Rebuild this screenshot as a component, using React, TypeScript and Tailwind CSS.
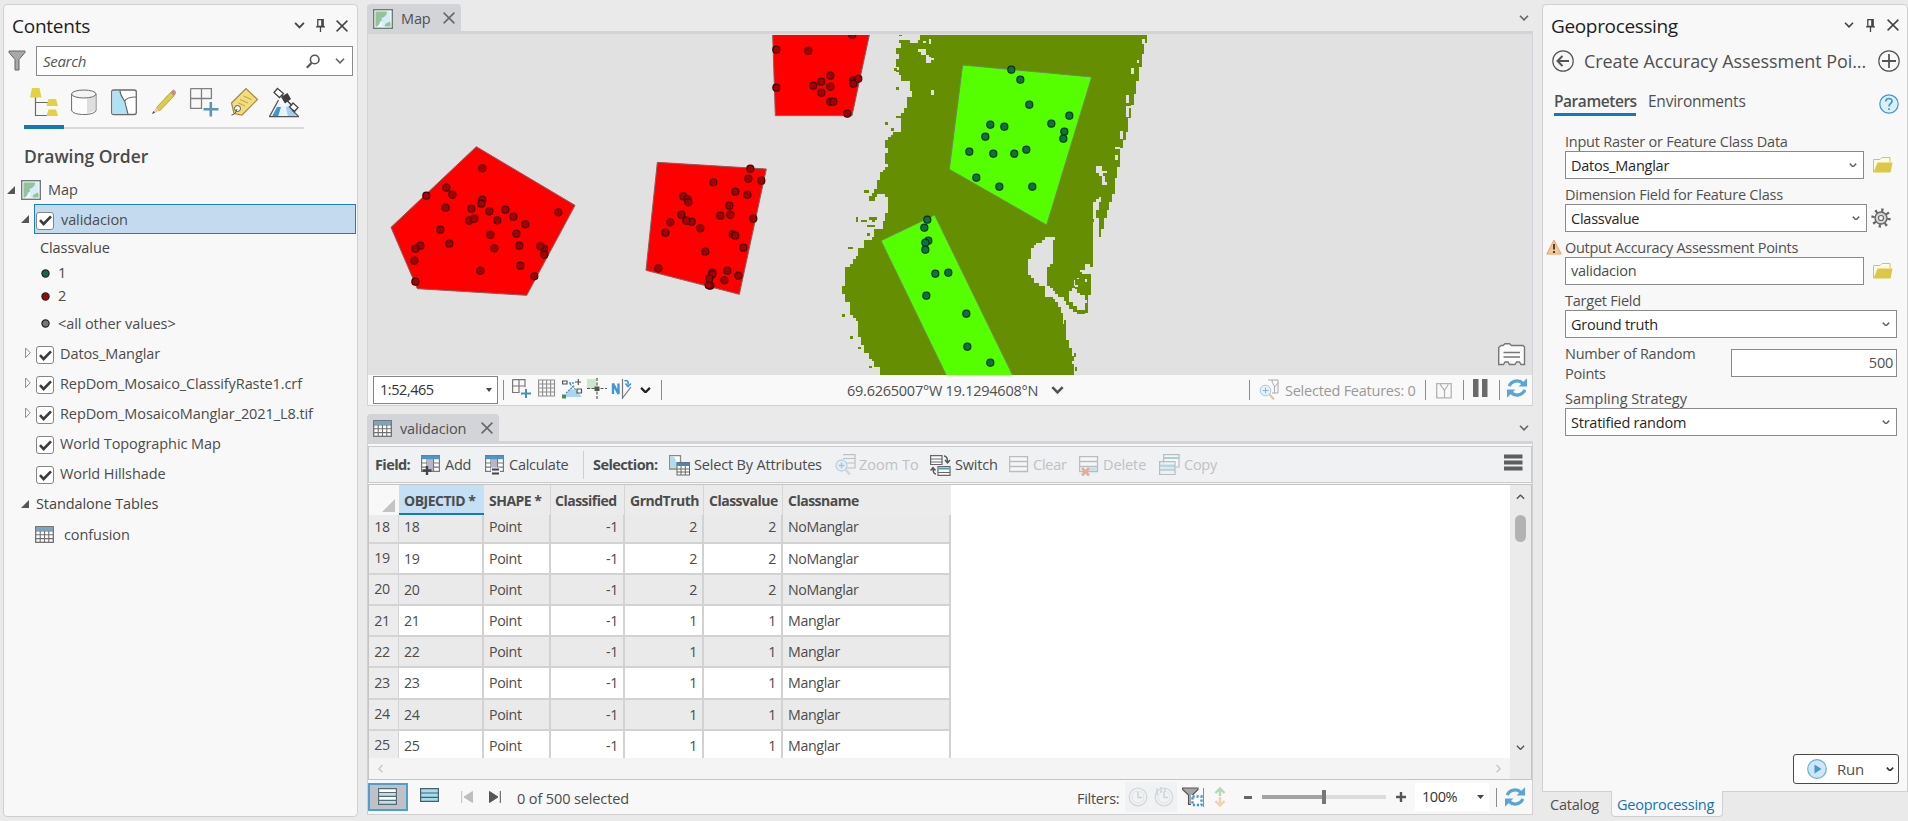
import type { ReactNode } from "react";

/* ---------- small shared icons ---------- */

function Chevron({ size = 10, color = "#444", sw = 1.6 }: { size?: number; color?: string; sw?: number }) {
  return (
    <svg width={size} height={size * 0.6} viewBox="0 0 10 6" className="shrink-0">
      <path d="M1 0.8 5 4.9 9 0.8" fill="none" stroke={color} strokeWidth={sw} />
    </svg>
  );
}

function Cross({ size = 12, color = "#444" }: { size?: number; color?: string }) {
  return (
    <svg width={size} height={size} viewBox="0 0 12 12" className="shrink-0">
      <path d="M0.6 0.6 11.4 11.4M11.4 0.6 0.6 11.4" stroke={color} strokeWidth="1.5" />
    </svg>
  );
}

function Pin() {
  return (
    <svg width="9" height="13" viewBox="0 0 9 13" className="shrink-0">
      <path d="M1.8 0.7H7.2V7.5H1.8ZM0 7.9H9M4.5 8V13" fill="none" stroke="#444" strokeWidth="1.3" />
      <path d="M5.2 1H7V7.5H5.2Z" fill="#444" />
    </svg>
  );
}

function Refresh() {
  return (
    <svg width="20" height="20" viewBox="0 0 20 20" className="shrink-0">
      <path d="M2.2 8.2C4.500 2.600 12 1.200 16 5.600" fill="none" stroke="#5aa5d8" strokeWidth="3.200" />
      <path d="M20 0.300V8.600H11.600Z" fill="#5aa5d8" />
      <path d="M17.800 11.800C15.500 17.400 8 18.800 4 14.400" fill="none" stroke="#5aa5d8" strokeWidth="3.200" />
      <path d="M0 19.700V11.400H8.400Z" fill="#5aa5d8" />
    </svg>
  );
}

function MapIcon() {
  return (
    <svg width="20" height="20" viewBox="0 0 20 20" className="shrink-0">
      <rect x="0.7" y="0.7" width="18.6" height="18.6" fill="#fff" stroke="#6e7b78" strokeWidth="1.4" />
      <rect x="2.5" y="2.5" width="15" height="15" fill="#d6ecf7" />
      <path d="M2.500 2.500H14L13.500 5.500 11 8 8.500 9 9 11.500 7 12.500 6.500 15 4 17.500H2.500Z" fill="#93c39b" />
      <path d="M11.500 17.500 12.500 14.500 14.500 14 16 12.500 17.500 13.500V17.500Z" fill="#93c39b" />
      <path d="M4.500 17.500 6.500 15 8 12.500 10 14 8.500 17.500Z" fill="#eef7fb" />
    </svg>
  );
}

function TableIcon() {
  return (
    <svg width="19" height="17" viewBox="0 0 19 17" className="shrink-0">
      <rect x="0.7" y="0.7" width="17.6" height="15.6" fill="#fff" stroke="#707070" strokeWidth="1.3" />
      <rect x="1" y="1" width="17" height="3.6" fill="#6fa8cc" />
      <path d="M1 5H18M1 8.8H18M1 12.6H18M5.2 5V16M9.5 5V16M13.8 5V16" stroke="#707070" strokeWidth="1.1" />
    </svg>
  );
}

function Checkbox() {
  return (
    <span className="flex h-[18px] w-[18px] shrink-0 items-center justify-center rounded-[3px] border border-[#858585] bg-white">
      <svg width="13" height="11" viewBox="0 0 13 11">
        <path d="M1 5.2 4.6 9 12 1.4" fill="none" stroke="#3c3c3c" strokeWidth="2.6" />
      </svg>
    </span>
  );
}

function Expanded() {
  return (
    <svg width="8" height="8" viewBox="0 0 8 8" className="shrink-0">
      <path d="M8 0V8H0Z" fill="#555" />
    </svg>
  );
}

function Collapsed() {
  return (
    <svg width="6" height="12" viewBox="0 0 6 12" className="shrink-0">
      <path d="M0.6 1V10.6L5.2 5.8Z" fill="#fff" stroke="#8a8a8a" strokeWidth="1" />
    </svg>
  );
}

function Dot({ fill }: { fill: string }) {
  return (
    <svg width="9" height="9" viewBox="0 0 9 9" className="shrink-0">
      <circle cx="4.5" cy="4.5" r="3.6" fill={fill} stroke="#222" strokeWidth="1.2" />
    </svg>
  );
}

function Sep({ className = "" }: { className?: string }) {
  return <span className={`w-px shrink-0 bg-[#8c8c8c] ${className}`} />;
}

/* ---------- contents pane ---------- */

function ContentsTabs() {
  return (
    <div className="ml-[20px] mt-[10px] flex h-[44px] w-[281px] shrink-0 flex-col">
      <svg width="281" height="36" viewBox="24 86 281 36">
        <path d="M35.5 95V115.500H48M35.500 102.500H48" fill="none" stroke="#6a6a6a" strokeWidth="1.200" />
        <path d="M32 88H39.500L41.500 97.500H30ZM48.500 99H56L58 106H46.500ZM48.500 109.500H56L58 116H46.500Z" fill="#e3d044" />
        <path d="M71.600 94V110C71.600 116 96 116 96 110V94Z" fill="#fdfdfd" stroke="#6a6a6a" />
        <path d="M87 98.500 95.500 96V110.500L87 113.500Z" fill="#dedede" />
        <ellipse cx="83.800" cy="94" rx="12.200" ry="4" fill="#f4f4f4" stroke="#6a6a6a" />
        <rect x="111.700" y="90" width="24.600" height="24.500" rx="2" fill="#fff" stroke="#6a6a6a" strokeWidth="1.300" />
        <path d="M112.500 91H120C120 96 124 99 125 102C126 107 127 109 128 114H112.500Z" fill="#aee3f5" />
        <path d="M120 90.500C120 96 124 99 125 102C126 107 127 109 128 114.500M124.500 101.500C126 98 131 97 136 97" fill="none" stroke="#6a6a6a" strokeWidth="1.200" />
        <path d="M156.500 107.500 170.500 92.500 174 96 159.500 111Z" fill="#e0cb47" stroke="#98904a" strokeWidth="0.700" />
        <path d="M156.500 107.500 159.500 111 152 114Z" fill="#e8cda0" />
        <path d="M152 114 153.500 111 155 112.800Z" fill="#444" />
        <path d="M170.500 92.500 172.500 90C174 89 177 92 175.600 94L174 96Z" fill="#c98a80" />
        <path d="M190.600 88.600H211.400V99M190.600 88.600V108.400H201.500V88.600M190.600 98.500H211.400V99" fill="none" stroke="#808080" strokeWidth="1.300" />
        <path d="M210.800 102V116.500M203.500 109.300H218.500" stroke="#5f93b4" strokeWidth="2.600" />
        <path d="M231.500 103 246 88.500 257.500 99.500 242 115 234 113.500Z" fill="#f3db7e" stroke="#a08c3e" strokeWidth="1.200" />
        <path d="M240 99.500 248 103M243.500 96 251.500 99.500M238.500 103 245 106" stroke="#b8a050" strokeWidth="1" />
        <circle cx="237.500" cy="108.500" r="3" fill="#fff" stroke="#555" />
        <path d="M237 109C236 113 234 115 231.500 115" fill="none" stroke="#555" />
        <path d="M269.500 116.500 275 106 279 103 284 106 290 103 298.500 116.500Z" fill="#e7f3fa" />
        <path d="M272 116.500 277 107 281 107 278 116.500Z" fill="#3f97cf" />
        <path d="M286 107 291 106 296 116.500H288Z" fill="#9fd0ec" />
        <path d="M269.500 116.500 278.500 100M292 110 298.500 116.500M269 116.600H299" fill="none" stroke="#555" strokeWidth="1.300" />
        <path d="M281 97 287.500 93 291 99 285 103.500Z" fill="#3c3c3c" />
        <path d="M277.500 88.500 283.500 93.500 279.500 97.500 274 92.500ZM293 103 298 107.500 294.500 111.500 289.500 107Z" fill="#fff" stroke="#444" strokeWidth="1.300" />
        <path d="M281.500 95 292 105.500" stroke="#444" strokeWidth="1.500" />
      </svg>
      <div className="mt-[3px] flex items-end">
        <span className="h-1 w-10 bg-[#1279b9]" />
        <span className="h-[2px] w-[240px] bg-[#d8d8d8]" />
      </div>
    </div>
  );
}

function LayerRow({ name, collapsed = false }: { name: string; collapsed?: boolean }) {
  return (
    <div className="flex h-[30px] items-center">
      <span className="ml-[21px] flex w-[11px] pb-0.5">{collapsed && <Collapsed />}</span>
      <span className="flex pt-0.5">
        <Checkbox />
      </span>
      <span className="ml-[6px] whitespace-nowrap">{name}</span>
    </div>
  );
}

function Contents() {
  return (
    <section className="ml-[3px] mt-1 flex h-[813px] w-[355px] shrink-0 flex-col rounded-[4px] border border-[#d0d0d0] bg-[#f8f8f8]">
      <header className="flex h-[41px] shrink-0 items-center">
        <h2 className="ml-2 w-[282px] pt-0.5 text-[19px] tracking-[-0.25px] text-[#1e1e1e]">Contents</h2>
        <Chevron size={11} />
        <span className="ml-[11px] flex">
          <Pin />
        </span>
        <span className="ml-[11px] flex">
          <Cross />
        </span>
      </header>
      <div className="flex h-[30px] shrink-0">
        <svg width="18" height="21" viewBox="0 0 18 21" className="ml-1 mt-[4px]">
          <path d="M1 1H17V2.500L11 9.500V20H7V9.500L1 2.500Z" fill="#a8a8a8" stroke="#666" strokeWidth="1" />
        </svg>
        <div className="ml-[10px] flex w-[317px] items-center border border-[#8a8a8a] bg-white">
          <span className="ml-[6px] w-[263px] pt-px text-[15px] italic tracking-[-0.3px] text-[#555]">Search</span>
          <svg width="14" height="15" viewBox="0 0 14 15">
            <circle cx="8.700" cy="5.500" r="4.300" fill="none" stroke="#555" strokeWidth="1.600" />
            <path d="M5.500 9 0.800 13.800" stroke="#555" strokeWidth="2.200" />
          </svg>
          <span className="ml-[15px] flex">
            <Chevron size={10} color="#666" />
          </span>
        </div>
      </div>
      <ContentsTabs />
      <div className="ml-[20px] mt-[14px] h-[31px] shrink-0 text-[17.500px] font-semibold leading-[24px] tracking-[-0.05px] text-[#4a4a4a]">
        Drawing Order
      </div>
      <div className="flex flex-col text-[14.500px] tracking-[-0.09px] text-[#4c4c4c]">
        <div className="flex h-[29px] items-center">
          <span className="ml-[3px] flex w-[14px]">
            <Expanded />
          </span>
          <MapIcon />
          <span className="ml-[7px]">Map</span>
        </div>
        <div className="flex h-[30px]">
          <span className="ml-[17px] flex w-[13px] items-center">
            <Expanded />
          </span>
          <div className="flex w-[322px] items-center border border-[#1f7fbd] bg-[#c4dbef] pl-px">
            <span className="flex pt-[3px]">
              <Checkbox />
            </span>
            <span className="ml-[7px] pt-0.5">validacion</span>
          </div>
        </div>
        <div className="ml-[36px] flex h-[28px] items-center font-medium text-[#454545]">Classvalue</div>
        <div className="ml-[37px] flex h-[22px] items-center gap-2">
          <Dot fill="#0f6b45" />1
        </div>
        <div className="ml-[37px] flex h-[24px] items-center gap-2">
          <Dot fill="#9b0707" />2
        </div>
        <div className="ml-[37px] flex h-[31px] items-center gap-2">
          <Dot fill="#777" />&lt;all other values&gt;
        </div>
        <LayerRow name="Datos_Manglar" collapsed />
        <LayerRow name="RepDom_Mosaico_ClassifyRaste1.crf" collapsed />
        <LayerRow name="RepDom_MosaicoManglar_2021_L8.tif" collapsed />
        <LayerRow name="World Topographic Map" />
        <LayerRow name="World Hillshade" />
        <div className="flex h-[30px] items-center font-medium text-[#454545]">
          <span className="ml-[17px] flex w-[15px]">
            <Expanded />
          </span>
          Standalone Tables
        </div>
        <div className="flex h-[31px] items-center">
          <span className="ml-[31px] mr-[10px] flex">
            <TableIcon />
          </span>
          confusion
        </div>
      </div>
    </section>
  );
}

/* ---------- map view ---------- */

type Pt = [number, number];

const redDots: Pt[] = [
  [352, 505], [244, 563], [262, 584], [184, 587], [242, 623], [319, 626], [352, 599], [349, 611], [373, 634], [421, 629],
  [445, 650], [397, 661], [312, 662], [328, 656], [481, 673], [580, 637], [226, 689], [253, 731], [376, 704], [454, 701],
  [388, 745], [463, 737], [166, 737], [151, 746], [148, 782], [151, 845], [346, 812], [466, 797], [508, 829], [537, 746],
  [526, 739], [538, 764],
  [1156, 506], [1150, 536], [1189, 542], [1045, 547], [1111, 575], [1147, 584], [955, 589], [967, 597], [970, 607],
  [1093, 617], [1096, 644], [1066, 647], [949, 644], [980, 665], [964, 662], [916, 667], [901, 698], [1006, 685],
  [1165, 656], [1103, 703], [1111, 707], [1135, 743], [1021, 755], [880, 805], [1087, 812], [1120, 827], [1078, 841],
  [1042, 818], [1042, 823], [1033, 836], [1036, 857], [1031, 856],
  [1234, 149], [1234, 263], [1462, 104], [1330, 152], [1396, 227], [1369, 245], [1345, 257], [1396, 260], [1369, 278],
  [1465, 241], [1465, 251], [1480, 236], [1396, 305], [1405, 305], [1447, 341],
];

const greenDots: Pt[] = [
  [694, 209], [721, 239], [748, 314], [868, 347], [814, 371], [853, 395], [850, 416], [631, 374], [673, 380], [616, 410],
  [568, 455], [640, 461], [703, 461], [739, 449], [589, 533], [658, 560], [757, 560], [442, 659], [433, 683], [445, 722],
  [436, 728], [436, 749], [466, 821], [505, 818], [439, 887], [559, 941], [562, 1040], [631, 1088],
];

const land: Pt[] = [
  [424, 100], [424, 120], [408, 125], [405, 122], [405, 130], [388, 130], [388, 122], [372, 122], [372, 118], [358, 118], [358, 130], [366, 132], [366, 146],
  [350, 148], [350, 162], [358, 165], [358, 178], [350, 180], [350, 197], [358, 205], [350, 213], [354, 224],
  [366, 228], [366, 238], [388, 238], [388, 268], [396, 275], [396, 292], [382, 294], [382, 318], [374, 322], [372, 340],
  [358, 345], [350, 352], [358, 358], [366, 360], [366, 390], [345, 396], [342, 402], [330, 402], [328, 415],
  [316, 422], [316, 445], [324, 446], [324, 456], [316, 458], [316, 488], [324, 490], [324, 503], [308, 506], [308, 515],
  [300, 518], [300, 538], [292, 540], [292, 565], [284, 568], [284, 582], [300, 578], [300, 584], [316, 582],
  [324, 590], [324, 602], [332, 604], [324, 610], [324, 635], [316, 640], [316, 658], [308, 660], [308, 684], [286, 686],
  [284, 715], [252, 718], [252, 740], [236, 745], [228, 752], [236, 762], [228, 775], [218, 778], [212, 797],
  [196, 805], [196, 852], [188, 858], [188, 878], [196, 882], [196, 902], [208, 904], [210, 940], [218, 945], [220, 958],
  [234, 960], [234, 1004], [242, 1010], [244, 1030], [252, 1034], [252, 1062], [268, 1064], [268, 1072], [276, 1074],
  [276, 1080], [286, 1082], [286, 1098], [300, 1100], [300, 1130], [882, 1130], [882, 1105], [882, 1095], [874, 1092],
  [882, 1076], [874, 1062], [874, 1047], [866, 1045], [866, 1022], [858, 1018], [858, 975], [850, 972], [850, 942],
  [842, 938], [842, 926], [836, 920], [834, 905], [826, 902], [818, 894], [796, 885], [796, 862], [778, 858],
  [776, 850], [760, 844], [760, 832], [748, 828], [748, 780], [754, 776], [754, 748], [762, 745], [762, 733], [784, 730],
  [788, 718], [796, 716], [796, 708], [828, 708], [828, 716], [820, 718], [820, 788], [812, 792], [804, 805],
  [804, 855], [812, 862], [820, 872], [830, 880], [836, 890], [852, 892], [864, 886], [872, 870], [890, 868], [886, 855], [886, 838],
  [896, 835], [900, 822], [912, 822], [900, 814], [918, 806], [916, 790], [934, 788], [934, 797], [940, 797],
  [938, 682], [938, 628], [942, 610], [956, 590], [966, 586], [966, 600], [956, 605], [956, 625],
  [950, 628], [950, 652], [958, 654], [958, 715], [966, 715], [966, 690], [974, 688], [974, 660], [982, 655],
  [982, 632], [990, 628], [990, 608], [998, 605], [998, 585], [1006, 582], [1006, 532], [1014, 530], [1014, 505],
  [1022, 500], [1022, 448], [1030, 445], [1030, 418], [1038, 415], [1038, 395], [1046, 390], [1046, 355],
  [1055, 350], [1055, 312], [1062, 308], [1062, 285], [1070, 280], [1070, 240], [1078, 235], [1078, 205],
  [1086, 200], [1086, 160], [1094, 155], [1094, 130], [1100, 128], [1100, 100],
];

const CELL = 8.1;

/** Snaps the outline to the raster's cells, giving one horizontal run per path segment. */
function rasterPath(poly: Pt[]): string {
  let d = "";
  for (let row = 0; row < 126; row++) {
    const y0 = 104 + row * CELL;
    const y = y0 + CELL / 2;
    const xs: number[] = [];
    poly.forEach(([x1, y1], i) => {
      const [x2, y2] = poly[(i + 1) % poly.length];
      if (y1 <= y !== y2 <= y) xs.push(x1 + ((y - y1) * (x2 - x1)) / (y2 - y1));
    });
    xs.sort((a, b) => a - b);
    for (let i = 0; i + 1 < xs.length; i += 2) {
      const a = Math.round(xs[i] / CELL) * CELL;
      const b = Math.round(xs[i + 1] / CELL) * CELL;
      if (b > a) d += `M${a.toFixed(1)} ${y0.toFixed(1)}H${b.toFixed(1)}v${CELL + 0.1}H${a.toFixed(1)}Z`;
    }
  }
  return d;
}

const landPath = rasterPath(land);

const specks =
  "M315 366h9v9h-9zM332 384h9v8h-9zM348 262h9v8h-9zM252 571h16v8h-16zM268 587h17v15h-17zM276 579h16v12h-16zM228 652h7v14h-7zM244 660h17v6h-17zM268 652h22v8h-22zM276 658h8v8h-8zM262 676h23v6h-23zM260 700h9v8h-9zM204 741h15v6h-15zM186 942h9v8h-9zM210 1008h8v8h-8zM234 1040h8v7h-8zM268 1098h8v6h-8zM358 103h8v5h-8zM342 204h8v8h-8zM882 1058h6v12h-6zM884 1100h6v12h-6zM933 658h8v9h-8z";

const spit =
  "M852 888H868V905H880V917H892V930H914V910H922V900H914V884H900V880H890V868H886V838H896V822H934V884H924V938H914V942H892V935H880V928H866V915H858V903H852ZM852 960h6v12h-6z";

const gaps =
  "M414 148h24v8h-24zM422 156h8v8h-8zM430 156h8v8h-8zM438 164h8v24h-8zM446 172h8v16h-8zM454 174h8v6h-8zM446 117h7v15h-7zM430 124h8v6h-8zM454 270h8v15h-8zM1086 117h8v15h-8zM1070 180h7v8h-7zM1054 204h8v17h-8zM1038 286h8v22h-8zM1038 318h8v32h-8zM1046 318h7v6h-7zM1020 392h8v25h-8zM1006 442h14v6h-14zM1006 464h8v15h-8zM948 498h18v22h-18zM966 512h14v8h-14zM956 520h12v8h-12zM966 528h8v27h-8zM974 545h7v10h-7zM940 608h8v20h-8zM914 838h8v8h-8zM886 855h8v5h-8z";

function MapCanvas() {
  return (
    <svg width="1164" height="341" viewBox="368 34 1164 341" className="block bg-[#e1e1e1]">
      <g transform="translate(780 0) scale(0.33333)">
        <g shapeRendering="crispEdges">
          <path d={landPath} fill="#668e02" />
          <path d={specks} fill="#668e02" />
          <path d={spit} fill="#668e02" />
          <path d={gaps} fill="#e1e1e1" />
        </g>
        <g fill="#55ff00" stroke="#6e8a5a" strokeWidth="3">
          <path d="M548 195 935 231 800 675 508 508Z" />
          <path d="M501 1130 303 722 464 645 700 1130Z" />
        </g>
        <g fill="#0b7340" stroke="#06301c" strokeWidth="3.400">
          {greenDots.map(([x, y], i) => (
            <circle key={i} cx={x} cy={y} r="10.600" />
          ))}
        </g>
      </g>
      <g transform="translate(365 0) scale(0.33333)">
        <g fill="#ff0000" stroke="#85605c" strokeWidth="3">
          <path d="M334 440 630 616 485 886 157 866 78 682Z" />
          <path d="M877 487 1204 507 1123 883 843 811Z" />
          <path d="M1223 105 1231 347H1461L1513 105" />
        </g>
        <g fill="#a80000" stroke="#3c0000" strokeWidth="3.400">
          {redDots.map(([x, y], i) => (
            <circle key={i} cx={x} cy={y} r="10.600" />
          ))}
        </g>
      </g>
      <rect x="368" y="34" width="1164" height="1" fill="#e1e1e1" />
      <path
        d="M1498.700 347.500 1501 345.500 1503 345.500 1505 343.700H1509.500L1511.500 345.500H1523L1524.500 347V364.500H1521L1519.500 362H1516.500L1515 364.500H1509.500L1508 362H1505L1503.500 364.500H1498.700Z"
        fill="#fbfbfb"
        stroke="#767676"
        strokeWidth="1.400"
      />
      <path d="M1503.500 352.500H1520M1503.500 357H1520" stroke="#767676" strokeWidth="1.400" />
    </svg>
  );
}

function ViewTab({ icon, label, width }: { icon: ReactNode; label: string; width: string }) {
  return (
    <div className={`flex items-center rounded-t-[4px] bg-[#d3d4d8] pl-[6px] text-[14.500px] tracking-[-0.15px] text-[#505050] ${width}`}>
      <span className="flex pt-[2px]">{icon}</span>
      <span className="ml-2 flex-1 pt-[3px]">{label}</span>
      <span className="mr-[6px] flex pt-px">
        <Cross color="#666" />
      </span>
    </div>
  );
}

function MapStatusBar() {
  return (
    <div className="flex h-[31px] items-center border-b border-[#cfcfcf] bg-[#f9f9f9] pl-[5px] text-[14.500px] text-[#505050]">
      <div className="flex h-[28px] w-[125px] items-center justify-between border border-[#858585] bg-white pl-[6px] pr-[5px] tracking-[-0.45px] text-[#333]">
        1:52,465
        <svg width="6" height="4" viewBox="0 0 6 4">
          <path d="M0 0H6L3 4Z" fill="#444" />
        </svg>
      </div>
      <Sep className="ml-[5px] h-5" />
      <svg width="121" height="24" viewBox="512 379 121 24" className="ml-[8px]">
        <path d="M512.600 380.600H525V388M512.600 380.600V393.500H519V380.600M512.600 387H525" fill="none" stroke="#777" strokeWidth="1.200" />
        <path d="M526 390V399M521 394.500H531" stroke="#4f8db5" strokeWidth="2" />
        <path d="M538.600 381H554.500V397H538.600ZM542.600 381V397M546.600 381V397M550.600 381V397M538.600 385H554.500M538.600 389H554.500M538.600 393H554.500" fill="none" stroke="#8e8e8e" strokeWidth="1.100" />
        <path d="M564 398 570 390 576 391 582 398Z" fill="#a9d5ee" />
        <path d="M562.600 382H567V385H562.600ZM577 390H581.500V394H577ZM575 383H581M578.300 380V386" fill="none" stroke="#555" strokeWidth="1.200" />
        <path d="M569 384H574M566 394 575 386M570 385 576 391" stroke="#4f8db5" strokeWidth="1.300" strokeDasharray="2 1" />
        <rect x="562" y="395.500" width="4" height="4" fill="#4e8b57" />
        <rect x="587" y="380" width="9" height="10" fill="#cde6cf" />
        <path d="M597 379V400" stroke="#555" strokeWidth="1.200" strokeDasharray="3 1.500" />
        <path d="M587 389.500H607" stroke="#555" strokeWidth="1.200" strokeDasharray="3 1.500" />
        <rect x="594.500" y="387.500" width="5" height="4.500" fill="#555" />
        <path d="M613 395V384.500L618.500 395V384.500" fill="none" stroke="#3f97d4" strokeWidth="2.400" />
        <path d="M622.500 380V400M622.500 399 631 388" stroke="#777" strokeWidth="1.200" />
        <path d="M624.500 382C627 380.500 629 382.500 628 385.500M625.500 384.500 628 387.500 631 384.500" fill="none" stroke="#3f97d4" strokeWidth="1.600" />
      </svg>
      <span className="ml-[7px] flex w-[11px]">
        <Chevron size={11} color="#222" sw={2} />
      </span>
      <Sep className="ml-[10px] h-5" />
      <span className="ml-[185px] w-[204px] whitespace-nowrap pt-[2px] tracking-[-0.25px]">69.6265007°W 19.1294608°N</span>
      <Chevron size={13} color="#555" sw={2} />
      <Sep className="ml-[185px] h-5" />
      <svg width="20" height="22" viewBox="0 0 20 22" className="ml-[9px] opacity-60">
        <path d="M9 1H19V14H13M13 1C13 5 15 5 15.500 8L15.500 14M15.500 8 19 4" fill="none" stroke="#777" />
        <circle cx="6.500" cy="11.500" r="5.300" fill="#dceef8" stroke="#6aa6cc" />
        <path d="M6.500 8.500V14.500M3.500 11.500H9.500" stroke="#4a84ac" />
        <path d="M10.500 15.500 15 20.500" stroke="#c9a27c" strokeWidth="2" />
      </svg>
      <span className="ml-[6px] w-[140px] whitespace-nowrap pt-px tracking-[-0.24px] text-[#9a9a9a]">Selected Features: 0</span>
      <Sep className="h-5" />
      <svg width="16" height="17" viewBox="0 0 16 17" className="ml-[10px]">
        <path d="M0.700 1.700H15.200V15.800H0.700ZM4.500 2C4.500 5 8 6 8.500 9V15.500M8.500 8.500C9 6 11.500 5.500 12 2.500" fill="none" stroke="#b3b3b3" strokeWidth="1.300" />
      </svg>
      <Sep className="ml-[11px] h-5" />
      <svg width="15" height="18" viewBox="0 0 15 18" className="mb-1 ml-[9px]">
        <path d="M0 0H5.500V18H0ZM9 0H14.500V18H9Z" fill="#6a6a6a" />
      </svg>
      <Sep className="ml-[11px] h-5" />
      <span className="ml-[7px] flex pb-1">
        <Refresh />
      </span>
    </div>
  );
}

/* ---------- attribute table ---------- */

function Rows({ extra }: { extra?: ReactNode }) {
  return (
    <svg width="20" height="22" viewBox="0 0 20 22" className="opacity-40">
      <path d="M0.600 2.600H18.500V17.500H0.600ZM0.600 7.500H18.500M0.600 12.500H18.500" fill="#fff" stroke="#6f6f6f" strokeWidth="1.300" />
      {extra}
    </svg>
  );
}

function FieldIcon({ children }: { children: ReactNode }) {
  return (
    <svg width="20" height="20" viewBox="0 0 20 20">
      <path d="M0.600 0.600H18.400V16.400H0.600ZM0.600 8H18.400M0.600 12.200H18.400M6 4V16.400M12.500 4V16.400" fill="#fff" stroke="#777" strokeWidth="1.200" />
      <rect x="6" y="4" width="6" height="12" fill="#b9b4c8" />
      <rect x="0.600" y="0.600" width="18" height="3.600" fill="#4f94c4" />
      {children}
    </svg>
  );
}

function TableToolbar() {
  return (
    <div className="mt-[2px] flex h-[37px] items-center border border-[#c9cacc] bg-[#eff1f3] pl-[6px] text-[14.500px] tracking-[-0.25px] text-[#4c4c4c]">
      <b className="w-[46px] tracking-[-0.6px]">Field:</b>
      <FieldIcon>
        <path d="M6 11V20M1.500 15.500H10.500" stroke="#444" strokeWidth="2.400" />
      </FieldIcon>
      <span className="ml-[4px] w-[40px]">Add</span>
      <FieldIcon>
        <rect x="6" y="12.500" width="9" height="7.500" fill="#eff1f3" />
        <path d="M7 14.500H14M7 18.500H14" stroke="#444" strokeWidth="2" />
      </FieldIcon>
      <span className="ml-[4px] w-[74px] whitespace-nowrap">Calculate</span>
      <Sep className="h-[28px] bg-[#cfcfcf]" />
      <b className="ml-[9px] w-[76px] tracking-[-0.58px]">Selection:</b>
      <svg width="21" height="22" viewBox="0 0 21 22">
        <path d="M9 15H0.700V1.700H11.500V8" fill="#fff" stroke="#888" strokeWidth="1.300" />
        <path d="M1.500 2.500H5C6 6 8 7 8 10V14H1.500Z" fill="#aedcf0" />
        <rect x="8" y="8.500" width="12.500" height="12.500" fill="#fff" stroke="#666" />
        <rect x="8" y="8.500" width="12.500" height="3.500" fill="#4f86ad" />
        <path d="M8 15H20.500M8 18H20.500M12 12V21M16.300 12V21" stroke="#666" />
      </svg>
      <span className="ml-[4px] w-[141px] whitespace-nowrap tracking-[-0.17px]">Select By Attributes</span>
      <svg width="21" height="22" viewBox="0 0 21 22" className="opacity-40">
        <path d="M8 0.600H20V14H12M8 4.500H20M10 9H20" fill="none" stroke="#777" strokeWidth="1.200" />
        <circle cx="6.500" cy="11.500" r="5.500" fill="#dceef8" stroke="#6aa6cc" strokeWidth="1.300" />
        <path d="M6.500 8.500V14.500M3.500 11.500H9.500" stroke="#4a84ac" strokeWidth="1.500" />
        <path d="M10.500 15.500 15 20.500" stroke="#c9a27c" strokeWidth="2" />
      </svg>
      <span className="ml-[3px] w-[71px] whitespace-nowrap tracking-[0px] text-[#bfc1c3]">Zoom To</span>
      <svg width="21" height="22" viewBox="0 0 21 22">
        <path d="M0.600 1.600H12V10.500H0.600ZM8 12.500H20V21.300H8Z" fill="#fff" stroke="#666" strokeWidth="1.200" />
        <path d="M1 5H12M1 8H12M8 18.500H20" stroke="#666" />
        <path d="M8.500 14.500H19.500" stroke="#4b9bb4" strokeWidth="2" />
        <path d="M14 2C17 2 17.500 4 17.500 8M15 6 17.500 9 20 6M6 20C3.500 20 3 18 3 14M0.600 16.500 3 13.500 5.500 16.500" fill="none" stroke="#555" strokeWidth="1.400" />
      </svg>
      <span className="ml-[4px] w-[54px] tracking-[-0.2px]">Switch</span>
      <Rows />
      <span className="ml-[4px] w-[46px] text-[#bfc1c3]">Clear</span>
      <Rows
        extra={
          <>
            <path d="M7 13.500H18V17H11Z" fill="#8fc4dd" />
            <path d="M3 14 10 21.500M10 14 3 21.500" stroke="#d0471c" strokeWidth="2.600" />
          </>
        }
      />
      <span className="ml-[4px] w-[56px] tracking-[-0.1px] text-[#bfc1c3]">Delete</span>
      <svg width="21" height="22" viewBox="0 0 21 22" className="opacity-40">
        <path d="M4.600 0.600H20V13H4.600Z" fill="#fff" stroke="#6f6f6f" strokeWidth="1.200" />
        <path d="M4.600 4H20M0.600 11H16M0.600 15H16" stroke="#4b9bb4" strokeWidth="2" />
        <path d="M0.600 7.600H16V20.500H0.600Z" fill="#e8f4f6" fillOpacity="0.700" stroke="#6f6f6f" strokeWidth="1.200" />
        <path d="M0.600 12H16M0.600 16H16" stroke="#4b9bb4" strokeWidth="1.500" />
      </svg>
      <span className="ml-[4px] flex-1 text-[#bfc1c3]">Copy</span>
      <svg width="19" height="17" viewBox="0 0 19 17" className="mb-1 mr-[8px]">
        <path d="M0 0.500H18.500V4.500H0ZM0 6.500H18.500V10.500H0ZM0 12.500H18.500V16.500H0Z" fill="#5e5e5e" />
      </svg>
    </div>
  );
}

const rows = [
  ["18", "2", "NoManglar"],
  ["19", "2", "NoManglar"],
  ["20", "2", "NoManglar"],
  ["21", "1", "Manglar"],
  ["22", "1", "Manglar"],
  ["23", "1", "Manglar"],
  ["24", "1", "Manglar"],
  ["25", "1", "Manglar"],
];

const cols = "grid grid-cols-[30px_85px_67px_74px_79px_79px_168px]";

function AttributeTable() {
  const cell = "flex items-center border-b-2 border-r-2 border-[#d2d2d2] px-[5px]";
  return (
    <div className="mt-px flex h-[296px] flex-col border border-[#c4c4c4] text-[14.200px] tracking-[-0.35px] text-[#4c4c4c]">
      <div className="flex h-[273px]">
        <div className="flex flex-1 flex-col overflow-hidden bg-white">
          <div className={`${cols} h-[30px] w-[582px] shrink-0 bg-[#ebebeb] text-[14px] font-bold tracking-[-0.500px]`}>
            <span className="flex items-end justify-end bg-[#f8f8f8] pb-[3px] pr-1">
              <svg width="13" height="13" viewBox="0 0 13 13">
                <path d="M13 0V13H0Z" fill="#c4c4c4" />
              </svg>
            </span>
            <span className="flex items-center whitespace-nowrap border-b-2 border-[#1c78b4] bg-[#c5e0f5] pl-[5px] pt-[3px]">OBJECTID *</span>
            <span className="flex items-center whitespace-nowrap border-r border-[#d6d6d6] pl-[5px] pt-px">SHAPE *</span>
            <span className="flex items-center whitespace-nowrap border-r border-[#d6d6d6] pl-[4px] pt-px">Classified</span>
            <span className="flex items-center whitespace-nowrap border-r border-[#d6d6d6] pl-[5px] pt-px">GrndTruth</span>
            <span className="flex items-center whitespace-nowrap border-r border-[#d6d6d6] pl-[5px] pt-px">Classvalue</span>
            <span className="flex items-center whitespace-nowrap pl-[5px] pt-px">Classname</span>
          </div>
          <div className="flex h-[243px] flex-col justify-end overflow-hidden">
            <div className="-mb-[4px] shrink-0">
              {rows.map(([id, v, name], i) => (
                <div key={id} className={`${cols} h-[31.200px] w-[582px] ${i % 2 ? "bg-white" : "bg-[#eaeaea]"}`}>
                  <span className="flex items-center justify-center border-b-2 border-r border-[#d4d4d4] bg-[#ececec] pb-px pr-[3px]">{id}</span>
                  <span className={cell}>{id}</span>
                  <span className={cell}>Point</span>
                  <span className={`${cell} justify-end`}>-1</span>
                  <span className={`${cell} justify-end`}>{v}</span>
                  <span className={`${cell} justify-end`}>{v}</span>
                  <span className={cell}>{name}</span>
                </div>
              ))}
            </div>
          </div>
        </div>
        <div className="flex w-[21px] flex-col items-center bg-[#ebebeb]">
          <span className="mt-[9px] flex rotate-180">
            <Chevron size={9} color="#555" />
          </span>
          <span className="mt-[16px] h-[27px] w-[11px] rounded-full bg-[#b3b3b3]" />
          <span className="mt-auto flex pb-[8px]">
            <Chevron size={9} color="#555" />
          </span>
        </div>
      </div>
      <div className="flex h-[21px]">
        <div className="flex flex-1 items-center justify-between bg-[#f4f4f4] px-[7px]">
          <span className="flex rotate-90">
            <Chevron size={9} color="#c8c8c8" />
          </span>
          <span className="flex -rotate-90">
            <Chevron size={9} color="#c8c8c8" />
          </span>
        </div>
        <div className="w-[21px] bg-[#ebebeb]" />
      </div>
    </div>
  );
}

function Clock({ marks = false }: { marks?: boolean }) {
  return (
    <svg width="20" height="20" viewBox="0 0 20 20">
      <circle cx="10" cy="10" r="8.800" fill="none" stroke="#d3d8db" strokeWidth="1.300" />
      <circle cx="10" cy="10" r="6" fill="none" stroke="#e0e4e6" />
      <path d="M10 5V10.500H14" fill="none" stroke="#cdd2d6" strokeWidth="1.400" />
      {marks && <path d="M3 1V8M7 0V6M11 1V5" stroke="#c6d3da" strokeWidth="1.300" />}
    </svg>
  );
}

function TableFooter() {
  return (
    <div className="flex h-[35px] items-center border-b border-[#d0d0d0] bg-[#f8f8f8] text-[14.500px] tracking-[-0.12px] text-[#4c4c4c]">
      <span className="flex h-[28px] w-[40px] shrink-0 items-center justify-center border-2 border-[#4d9fd0] bg-[#bfc1c6] pb-px pr-px">
        <svg width="19" height="17" viewBox="0 0 19 17">
          <path d="M0.600 0.600H18.400V16.400H0.600Z" fill="#fff" />
          <path d="M1 4.500H18V8H1ZM1 12H18V16H1Z" fill="#b9e2ee" />
          <path d="M0.600 0.600H18.400V16.400H0.600ZM0.600 4.500H18.400M0.600 8.400H18.400M0.600 12.400H18.400" fill="none" stroke="#586a72" strokeWidth="1.200" />
        </svg>
      </span>
      <svg width="19" height="14" viewBox="0 0 19 14" className="mb-[5px] ml-[12px]">
        <path d="M0.600 0.600H18.400V13.400H0.600ZM0.600 5H18.400M0.600 9.300H18.400" fill="#a9dcea" stroke="#44606c" strokeWidth="1.200" />
      </svg>
      <svg width="12" height="12" viewBox="0 0 12 12" className="mb-[1px] ml-[22px]">
        <path d="M0.700 0V12M11.500 0.500V11.500L3 6Z" fill="#bdbdbd" stroke="#bdbdbd" />
      </svg>
      <svg width="12" height="12" viewBox="0 0 12 12" className="mb-[1px] ml-[16px]">
        <path d="M11.300 0V12M0.500 0.500V11.500L9 6Z" fill="#555" stroke="#555" />
      </svg>
      <span className="ml-[16px] flex-1 pt-[3px]">0 of 500 selected</span>
      <span className="mr-[5px] w-[43px] pt-[3px] tracking-[-0.3px]">Filters:</span>
      <span className="flex h-[30px] w-[52px] items-center justify-center gap-[6px] bg-[#f0f2f3]">
        <Clock />
        <Clock marks />
      </span>
      <svg width="21" height="20" viewBox="0 0 21 20" className="ml-[5px]">
        <path d="M0.600 1H16V2.500L10.500 8V17.500H6.500V8L0.600 2.500Z" fill="#a6a6a6" stroke="#555" strokeWidth="1.100" />
        <path d="M9 8H20V19H9Z" fill="#f8f8f8" />
        <path d="M10.500 9.500H19.500V18H10.500Z" fill="#fff" stroke="#3f97d4" strokeWidth="2.400" strokeDasharray="2.200 1.800" />
      </svg>
      <Sep className="h-[19px]" />
      <svg width="12" height="20" viewBox="0 0 12 20" className="ml-[10px] opacity-80">
        <path d="M6 9V2M1.500 6 6 1.500 10.500 6" fill="none" stroke="#a3cfa8" strokeWidth="2.400" />
        <path d="M6 10V18M1.500 14 6 18.500 10.500 14" fill="none" stroke="#f1c89d" strokeWidth="2.400" />
      </svg>
      <span className="ml-[18px] h-[3px] w-[8px] bg-[#666]" />
      <div className="ml-[10px] flex h-[14px] w-[124px] items-center">
        <span className="h-1 w-[60px] bg-[#a3a3a3]" />
        <span className="h-[14px] w-1 bg-[#777]" />
        <span className="h-1 flex-1 bg-[#dcdcdc]" />
      </div>
      <svg width="10" height="10" viewBox="0 0 10 10" className="ml-[10px]">
        <path d="M5 0V10M0 5H10" stroke="#555" strokeWidth="2.400" />
      </svg>
      <div className="ml-[9px] flex h-[28px] w-[74px] items-center justify-between bg-white pl-[7px] pr-[5px] tracking-[-0.45px] text-[#333]">
        100%
        <svg width="7" height="4" viewBox="0 0 7 4">
          <path d="M0 0H7L3.500 4Z" fill="#444" />
        </svg>
      </div>
      <Sep className="ml-[7px] h-[19px]" />
      <span className="ml-[8px] mr-[7px] flex">
        <Refresh />
      </span>
    </div>
  );
}

function Center() {
  return (
    <main className="ml-[9px] mt-1 flex w-[1166px] shrink-0 flex-col">
      <div className="flex h-[27px] justify-between">
        <ViewTab icon={<MapIcon />} label="Map" width="w-[94px]" />
        <span className="mr-[4px] flex items-center pt-px">
          <Chevron color="#666" />
        </span>
      </div>
      <div className="h-[3px] bg-[#d3d4d8]" />
      <div className="border-x border-[#d3d4d8]">
        <MapCanvas />
        <MapStatusBar />
      </div>
      <div className="mt-[8px] flex h-[27px] justify-between">
        <ViewTab icon={<TableIcon />} label="validacion" width="w-[132px]" />
        <span className="mr-[4px] flex items-center pt-px">
          <Chevron color="#666" />
        </span>
      </div>
      <div className="h-[3px] bg-[#d3d4d8]" />
      <div className="border-x border-[#d0d0d0] bg-[#f8f8f8]">
        <TableToolbar />
        <AttributeTable />
        <TableFooter />
      </div>
    </main>
  );
}

/* ---------- geoprocessing pane ---------- */

function Folder() {
  return (
    <svg width="20" height="16" viewBox="0 0 20 16" className="ml-[9px] shrink-0">
      <path d="M0.500 15V2.500H7L9 0.500H17V5" fill="#fdfbe6" stroke="#d8c446" />
      <path d="M0.500 15.500 4.500 5.500H19.500L17.500 15.500Z" fill="#dcc747" />
    </svg>
  );
}

function Field({ value, width, select = true, muted = false }: { value: string; width: string; select?: boolean; muted?: boolean }) {
  return (
    <div className={`flex h-[28px] shrink-0 items-center justify-between border border-[#8a8a8a] bg-white pl-[5px] pr-[6px] ${width} ${muted ? "text-[#4c4c4c]" : "text-[#262626]"}`}>
      <span className={muted ? "" : "pt-px"}>{value}</span>
      {select && <Chevron size={8} color="#666" sw={1.9} />}
    </div>
  );
}

function Geoprocessing() {
  return (
    <aside className="ml-[9px] mt-1 flex w-[366px] shrink-0 flex-col text-[14.500px] tracking-[-0.24px] text-[#505050]">
      <div className="flex h-[788px] shrink-0 flex-col rounded-t-[4px] border border-[#d0d0d0] bg-[#f8f8f8]">
        <header className="flex h-[38px] items-center">
          <h2 className="ml-2 w-[293px] pt-[5px] text-[19px] tracking-[-0.35px] text-[#1e1e1e]">Geoprocessing</h2>
          <span className="flex pt-0.5">
            <Chevron size={10} />
          </span>
          <span className="ml-[12px] flex pt-0.5">
            <Pin />
          </span>
          <span className="ml-[12px] flex pt-0.5">
            <Cross />
          </span>
        </header>
        <div className="flex h-[36px] items-center">
          <svg width="22" height="22" viewBox="0 0 22 22" className="ml-[9px]">
            <circle cx="11" cy="11" r="10.200" fill="none" stroke="#555" strokeWidth="1.200" />
            <path d="M17 11H6M10.500 6 5.500 11 10.500 16" fill="none" stroke="#555" strokeWidth="2" />
          </svg>
          <span className="ml-[10px] w-[294px] whitespace-nowrap text-[18px] tracking-[-0.07px]">Create Accuracy Assessment Poi...</span>
          <svg width="22" height="22" viewBox="0 0 22 22" className="mb-px">
            <circle cx="11" cy="11" r="10.200" fill="none" stroke="#555" strokeWidth="1.200" />
            <path d="M11 4V18M4 11H18" fill="none" stroke="#555" strokeWidth="1.800" />
          </svg>
        </div>
        <div className="flex h-[52px] pt-[8px] text-[15.500px]">
          <div className="ml-[11px] flex h-[29px] w-[82px] items-center border-b-[3px] border-[#0f7abf] pt-[4px] font-semibold tracking-[-0.45px]">Parameters</div>
          <span className="ml-[12px] mt-[3px] w-[231px]">Environments</span>
          <svg width="20" height="20" viewBox="0 0 20 20" className="mt-[7px]">
            <circle cx="10" cy="10" r="9.200" fill="#ddf0fa" stroke="#3f97d4" strokeWidth="1.200" />
            <path d="M6.800 7.500C6.800 3.500 13 3.600 13 7.200C13 9.500 10 9.500 10 12.500M10 14.200V16" fill="none" stroke="#3f97d4" strokeWidth="1.700" />
          </svg>
        </div>
        <div className="flex flex-col pl-[22px]">
          <span className="h-[20px] leading-[22px]">Input Raster or Feature Class Data</span>
          <div className="flex items-center">
            <Field value="Datos_Manglar" width="w-[299px]" />
            <Folder />
          </div>
          <span className="mt-[5px] h-[20px] leading-[22px]">Dimension Field for Feature Class</span>
          <div className="flex items-center">
            <Field value="Classvalue" width="w-[302px]" />
            <svg width="20" height="20" viewBox="0 0 20 20" className="ml-[4px]">
              <circle cx="10" cy="10" r="8" fill="none" stroke="#666" strokeWidth="3.400" strokeDasharray="2.200 4.083" />
              <circle cx="10" cy="10" r="6" fill="#d4d4d4" stroke="#666" strokeWidth="1.400" />
              <circle cx="10" cy="10" r="2.500" fill="#f8f8f8" stroke="#666" strokeWidth="1.200" />
            </svg>
          </div>
          <div className="-ml-[19px] mt-[5px] flex h-[20px] items-center">
            <svg width="16" height="16" viewBox="0 0 16 16" className="mr-[3px]">
              <path d="M8 1 15.200 15H0.800Z" fill="#f8c595" stroke="#e5a468" strokeLinejoin="round" />
              <path d="M8 5V10.500M8 12V14" stroke="#444" strokeWidth="2" />
            </svg>
            <span className="pt-px tracking-[-0.28px]">Output Accuracy Assessment Points</span>
          </div>
          <div className="flex items-center">
            <Field value="validacion" width="w-[299px]" select={false} muted />
            <Folder />
          </div>
          <span className="mt-[5px] h-[20px] leading-[22px]">Target Field</span>
          <Field value="Ground truth" width="w-[332px]" />
          <div className="mt-[5px] flex h-[45px]">
            <span className="w-[166px] pr-5 pt-px leading-[20px]">Number of Random Points</span>
            <div className="mt-[6px] flex h-[28px] w-[166px] items-center justify-end border border-[#8a8a8a] bg-white pr-[3px]">500</div>
          </div>
          <span className="h-[20px] leading-[22px] tracking-[0.02px]">Sampling Strategy</span>
          <Field value="Stratified random" width="w-[332px]" />
        </div>
        <div className="mb-[7px] ml-[250px] mt-auto flex h-[30px] w-[106px] items-center rounded-[3px] border border-[#4a4a4a] bg-white">
          <svg width="20" height="20" viewBox="0 0 20 20" className="ml-[13px]">
            <circle cx="10" cy="10" r="9.300" fill="#cde7f7" stroke="#6aaedb" strokeWidth="1.200" />
            <path d="M7.500 5.500 14.500 10 7.500 14.500Z" fill="#3f97d4" />
          </svg>
          <span className="ml-[10px] w-[49px] pt-px text-[15px]">Run</span>
          <Chevron size={8} color="#333" sw={2} />
        </div>
      </div>
      <div className="flex h-[26px]">
        <span className="w-[69px] pl-[8px] leading-[26px]">Catalog</span>
        <span className="-mt-px h-[26px] w-[112px] rounded-b-[4px] border border-t-0 border-[#d0d0d0] bg-[#f8f8f8] pl-[5px] leading-[27px] text-[#1474b8]">
          Geoprocessing
        </span>
      </div>
    </aside>
  );
}

export default function App() {
  return (
    <div className="flex h-[821px] w-[1908px] overflow-hidden bg-[#eaeaea] font-['Open_Sans','Noto_Sans',sans-serif]">
      <Contents />
      <Center />
      <Geoprocessing />
    </div>
  );
}
